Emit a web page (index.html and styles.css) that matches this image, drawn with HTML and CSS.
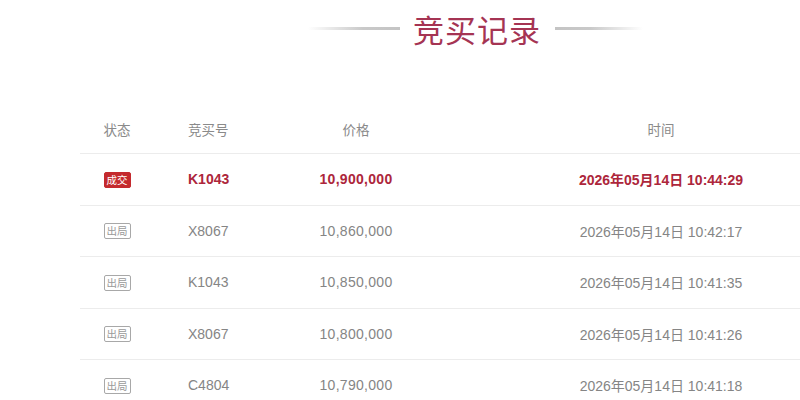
FILE: index.html
```html
<!DOCTYPE html>
<html lang="zh-CN">
<head>
<meta charset="utf-8">
<title>竞买记录</title>
<link rel="stylesheet" href="styles.css">
</head>
<body>
<div class="page">
  <header class="title-bar">
    <span class="title-line left"></span>
    <h1 class="title">竞买记录</h1>
    <span class="title-line right"></span>
  </header>
  <div class="table">
    <div class="row head">
      <div class="cell status">状态</div>
      <div class="cell id">竞买号</div>
      <div class="cell price">价格</div>
      <div class="cell spacer"></div>
      <div class="cell time">时间</div>
    </div>
    <div class="row win">
      <div class="cell status"><span class="badge deal">成交</span></div>
      <div class="cell id">K1043</div>
      <div class="cell price num">10,900,000</div>
      <div class="cell spacer"></div>
      <div class="cell time">2026年05月14日 10:44:29</div>
    </div>
    <div class="row">
      <div class="cell status"><span class="badge out">出局</span></div>
      <div class="cell id">X8067</div>
      <div class="cell price num">10,860,000</div>
      <div class="cell spacer"></div>
      <div class="cell time">2026年05月14日 10:42:17</div>
    </div>
    <div class="row">
      <div class="cell status"><span class="badge out">出局</span></div>
      <div class="cell id">K1043</div>
      <div class="cell price num">10,850,000</div>
      <div class="cell spacer"></div>
      <div class="cell time">2026年05月14日 10:41:35</div>
    </div>
    <div class="row">
      <div class="cell status"><span class="badge out">出局</span></div>
      <div class="cell id">X8067</div>
      <div class="cell price num">10,800,000</div>
      <div class="cell spacer"></div>
      <div class="cell time">2026年05月14日 10:41:26</div>
    </div>
    <div class="row">
      <div class="cell status"><span class="badge out">出局</span></div>
      <div class="cell id">C4804</div>
      <div class="cell price num">10,790,000</div>
      <div class="cell spacer"></div>
      <div class="cell time">2026年05月14日 10:41:18</div>
    </div>
  </div>
</div>
</body>
</html>
```

FILE: styles.css
```css
html, body {
  margin: 0;
  padding: 0;
  background: #ffffff;
}
body {
  width: 800px;
  height: 400px;
  overflow: hidden;
  font-family: "Liberation Sans", Arial, "Noto Sans CJK SC", sans-serif;
  color: #888888;
}
.page {
  width: 800px;
}
.title-bar {
  display: flex;
  align-items: center;
  height: 58px;
  padding-left: 308px;
  margin-bottom: 46px;
}
.title-line {
  display: block;
  height: 3px;
  margin-top: -2px;
}
.title-line.left {
  width: 92px;
  background: linear-gradient(to right, rgba(200,200,200,0), #c9c9c9 60%, #c4c4c4);
}
.title-line.right {
  width: 88px;
  background: linear-gradient(to right, #c4c4c4, #c9c9c9 40%, rgba(200,200,200,0));
}
.title {
  margin: 0 14px 0 13px;
  font-family: "Noto Sans CJK SC", sans-serif;
  font-weight: 400;
  font-size: 31px;
  line-height: 40px;
  color: #a53453;
  letter-spacing: 1px;
}
.table {
  margin-left: 80px;
  width: 720px;
}
.row {
  display: grid;
  grid-template-columns: 74px 146px 112px 110px 278px;
  align-items: center;
  height: 51.5px;
  box-sizing: border-box;
  border-bottom: 1px solid #ececec;
  font-size: 14px;
  color: #858585;
}
.row.head {
  height: 50px;
  font-family: "Noto Sans CJK SC", sans-serif;
  font-size: 13.5px;
  color: #8a8a8a;
}
.cell {
  white-space: nowrap;
}
.status {
  text-align: center;
}
.id {
  padding-left: 34px;
}
.price {
  text-align: center;
}
.num {
  letter-spacing: 0.3px;
}
.time {
  text-align: center;
}
.row.win {
  color: #ad263b;
  font-weight: 700;
}
.badge {
  display: inline-block;
  box-sizing: border-box;
  width: 27px;
  height: 16px;
  line-height: 14px;
  font-family: "Noto Sans CJK SC", sans-serif;
  font-size: 10.5px;
  font-weight: 400;
  text-align: center;
  border-radius: 2px;
  vertical-align: middle;
}
.badge.deal {
  background: #c42a2e;
  border: 1px solid #c42a2e;
  color: #ffffff;
}
.badge.out {
  background: #ffffff;
  border: 1px solid #a8a8a8;
  color: #9a9a9a;
}
```
